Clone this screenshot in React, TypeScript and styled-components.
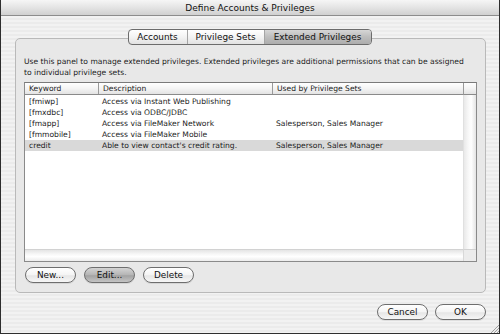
import React from 'react';
import styled, { createGlobalStyle } from 'styled-components';

const Global = createGlobalStyle`
  html, body { margin: 0; padding: 0; background: #fff; }
  body { width: 500px; height: 334px; overflow: hidden; font-family: "DejaVu Sans", "Noto Sans", sans-serif; color: #1a1a1a; }
`;

const Window = styled.div`
  position: relative;
  width: 500px;
  height: 334px;
  box-sizing: border-box;
  border-left: 1px solid #2e2e2e;
  border-right: 1px solid #2e2e2e;
  border-bottom: 1px solid #2e2e2e;
  display: flex;
  flex-direction: column;
  background: repeating-linear-gradient(180deg, #f2f2f2 0 2px, #ebebeb 2px 4px);
`;

const TitleBar = styled.div`
  height: 15px;
  flex: none;
  border-bottom: 1px solid #8c8c8c;
  background: linear-gradient(180deg, #f6f6f6 0%, #e2e2e2 55%, #d0d0d0 100%);
  display: flex;
  align-items: center;
  justify-content: center;
  font-size: 9px;
  color: #111;
`;

const Content = styled.div`
  flex: 1;
  display: flex;
  flex-direction: column;
  padding: 13px 13px 0 14px;
`;

const TabRow = styled.div`
  position: relative;
  z-index: 1;
  display: flex;
  justify-content: center;
  margin-bottom: -7px;
  padding-right: 2px;
`;

const TabGroup = styled.div`
  display: flex;
  height: 16px;
  box-sizing: border-box;
  border: 1px solid #6c6c6c;
  border-radius: 4px;
  overflow: hidden;
  background: linear-gradient(180deg, #ffffff 0%, #f3f3f3 50%, #e2e2e2 100%);
`;

const Tab = styled.div<{ $w: number; $active?: boolean }>`
  width: ${(p) => p.$w}px;
  display: flex;
  align-items: center;
  justify-content: center;
  font-size: 8.9px;
  color: #111;
  & + & { border-left: 1px solid #a5a5a5; }
  background: ${(p) =>
    p.$active ? 'linear-gradient(180deg, #d6d6d6 0%, #bdbdbd 50%, #adadad 100%)' : 'transparent'};
`;

const GroupBox = styled.div`
  height: 255px;
  box-sizing: border-box;
  border: 1px solid #b9b9b9;
  border-radius: 5px;
  background: #e8e8e8;
  padding: 17px 8px 0 8px;
  display: flex;
  flex-direction: column;
`;

const Intro = styled.p`
  margin: 0;
  font-size: 7.6px;
  line-height: 11px;
  white-space: nowrap;
  color: #1c1c1c;
`;

const Table = styled.div`
  margin-top: 4px;
  height: 180px;
  box-sizing: border-box;
  border: 1px solid #8a8a8a;
  border-top-color: #7a7a7a;
  background: #fff;
  display: grid;
  grid-template-columns: 1fr 13px;
  grid-template-rows: 12px 1fr 12px;
`;

const ColumnGrid = styled.div`
  display: grid;
  grid-template-columns: 73px 174px 1fr;
`;

const HeaderRow = styled(ColumnGrid)`
  border-bottom: 1px solid #8a8a8a;
  background: linear-gradient(180deg, #ffffff 0%, #f4f4f4 50%, #e3e3e3 100%);
`;

const HeaderCell = styled.div`
  font-size: 7.6px;
  line-height: 11px;
  padding-left: 4px;
  color: #1c1c1c;
  & + & { border-left: 1px solid #9a9a9a; }
`;

const HeaderCorner = styled.div`
  border-bottom: 1px solid #8a8a8a;
  border-left: 1px solid #9a9a9a;
  background: linear-gradient(180deg, #ffffff 0%, #f4f4f4 50%, #e3e3e3 100%);
`;

const Body = styled.div`
  display: flex;
  flex-direction: column;
  padding-top: 1px;
`;

const Row = styled(ColumnGrid)<{ $selected?: boolean }>`
  height: 11px;
  background: ${(p) => (p.$selected ? '#d9d9d9' : 'transparent')};
`;

const Cell = styled.div`
  font-size: 7.6px;
  line-height: 11px;
  padding-left: 4px;
  white-space: nowrap;
  color: #1c1c1c;
`;

const VTrack = styled.div`
  background: linear-gradient(90deg, #e9e9e9 0%, #f7f7f7 35%, #ffffff 60%, #e4e4e4 100%);
  border-left: 1px solid #e0e0e0;
`;

const HTrack = styled.div`
  border-top: 1px solid #d2d2d2;
  background: linear-gradient(180deg, #e4e4e4 0%, #f6f6f6 35%, #ffffff 60%, #ececec 100%);
`;

const Corner = styled.div`
  border-top: 1px solid #d2d2d2;
  border-left: 1px solid #d8d8d8;
  background: #ececec;
`;

const ButtonRow = styled.div<{ $end?: boolean }>`
  display: flex;
  gap: ${(p) => (p.$end ? 7 : 8)}px;
  justify-content: ${(p) => (p.$end ? 'flex-end' : 'flex-start')};
`;

const GroupButtons = styled(ButtonRow)`
  margin-top: 5px;
  padding-left: 1px;
`;

const DialogButtons = styled(ButtonRow)`
  margin-top: 11px;
`;

const PillButton = styled.button<{ $default?: boolean }>`
  width: 51px;
  height: 16px;
  box-sizing: border-box;
  padding: 0;
  border: 1px solid #6e6e6e;
  border-radius: 8px;
  font-family: inherit;
  font-size: 8.9px;
  line-height: 13px;
  color: #111;
  background: ${(p) =>
    p.$default
      ? 'linear-gradient(180deg, #d4d4d4 0%, #b4b4b4 50%, #a2a2a2 55%, #c4c4c4 100%)'
      : 'linear-gradient(180deg, #ffffff 0%, #f4f4f4 50%, #e6e6e6 55%, #f6f6f6 100%)'};
  box-shadow: 0 1px 0 rgba(0, 0, 0, 0.08);
`;

const Grip = styled.svg`
  position: absolute;
  right: 0;
  bottom: 0;
`;

const rows = [
  { k: '[fmiwp]', d: 'Access via Instant Web Publishing', u: '' },
  { k: '[fmxdbc]', d: 'Access via ODBC/JDBC', u: '' },
  { k: '[fmapp]', d: 'Access via FileMaker Network', u: 'Salesperson, Sales Manager' },
  { k: '[fmmobile]', d: 'Access via FileMaker Mobile', u: '' },
  { k: 'credit', d: "Able to view contact's credit rating.", u: 'Salesperson, Sales Manager', sel: true },
];

export default function App() {
  return (
    <>
      <Global />
      <Window>
        <TitleBar>Define Accounts &amp; Privileges</TitleBar>
        <Content>
          <TabRow>
            <TabGroup>
              <Tab $w={58}>Accounts</Tab>
              <Tab $w={76}>Privilege Sets</Tab>
              <Tab $w={106} $active>Extended Privileges</Tab>
            </TabGroup>
          </TabRow>
          <GroupBox>
            <Intro>
              Use this panel to manage extended privileges. Extended privileges are additional permissions that can be assigned
              <br />
              to individual privilege sets.
            </Intro>
            <Table>
              <HeaderRow>
                <HeaderCell>Keyword</HeaderCell>
                <HeaderCell>Description</HeaderCell>
                <HeaderCell>Used by Privilege Sets</HeaderCell>
              </HeaderRow>
              <HeaderCorner />
              <Body>
                {rows.map((r) => (
                  <Row key={r.k} $selected={r.sel}>
                    <Cell>{r.k}</Cell>
                    <Cell>{r.d}</Cell>
                    <Cell>{r.u}</Cell>
                  </Row>
                ))}
              </Body>
              <VTrack />
              <HTrack />
              <Corner />
            </Table>
            <GroupButtons>
              <PillButton>New...</PillButton>
              <PillButton $default>Edit...</PillButton>
              <PillButton>Delete</PillButton>
            </GroupButtons>
          </GroupBox>
          <DialogButtons $end>
            <PillButton>Cancel</PillButton>
            <PillButton>OK</PillButton>
          </DialogButtons>
        </Content>
        <Grip width="9" height="9" viewBox="0 0 9 9">
          <path d="M1 9 L9 1 M4 9 L9 4 M7 9 L9 7" stroke="#8a8a8a" strokeWidth="0.8" fill="none" />
        </Grip>
      </Window>
    </>
  );
}
